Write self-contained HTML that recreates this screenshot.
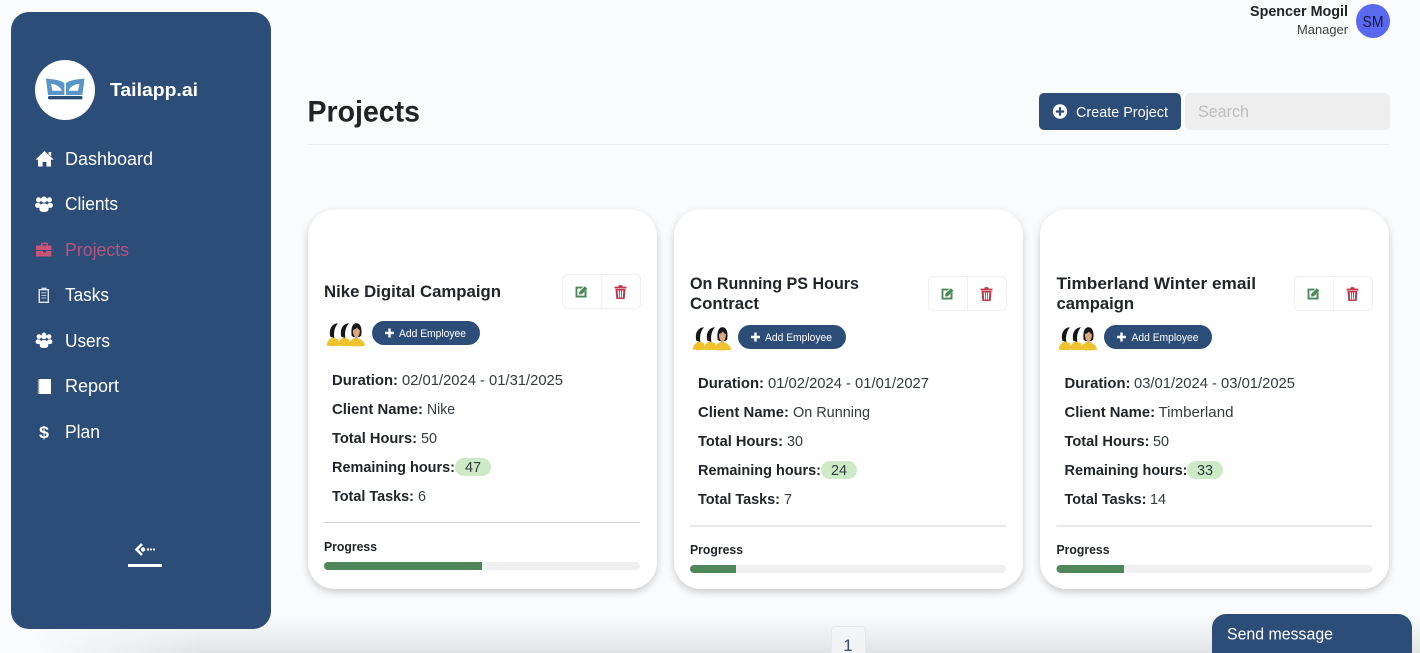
<!DOCTYPE html>
<html lang="en"><head><meta charset="utf-8"><title>Projects</title>
<style>
html,body{margin:0;padding:0;background:#fafbfd;width:1420px;height:653px;overflow:hidden}
svg{display:block;font-family:"Liberation Sans",sans-serif}
.b{font-weight:700;fill:#212529}
.v{fill:#333a40}
.d{font-size:15px}
.n{font-size:18.5px;fill:#fff}
</style></head><body>
<svg width="1420" height="653" viewBox="0 0 1420 653" xmlns="http://www.w3.org/2000/svg">
<defs>
<linearGradient id="bot" x1="0" y1="0" x2="0" y2="1"><stop offset="0" stop-color="#fafbfd"/><stop offset="1" stop-color="#e2e3e5"/></linearGradient>
<linearGradient id="fadeL" x1="0" y1="0" x2="1" y2="0"><stop offset="0" stop-color="#000"/><stop offset="1" stop-color="#fff"/></linearGradient>
<mask id="mk"><rect width="1420" height="653" fill="#000"/><rect x="200" y="615" width="1220" height="38" fill="#fff"/><rect x="30" y="615" width="170" height="38" fill="url(#fadeL)"/></mask>
<filter id="cs" x="-10%" y="-10%" width="120%" height="120%"><feDropShadow dx="0" dy="3" stdDeviation="4" flood-color="#000" flood-opacity=".2"/></filter>
<symbol id="people" viewBox="0 0 18 16">
<circle cx="3.6" cy="3.8" r="2.5" fill="#fff"/><circle cx="14.4" cy="3.8" r="2.5" fill="#fff"/><circle cx="9" cy="3.6" r="3.1" fill="#fff"/>
<ellipse cx="2.9" cy="9.3" rx="2.9" ry="2.6" fill="#fff"/><ellipse cx="15.1" cy="9.3" rx="2.9" ry="2.6" fill="#fff"/>
<path d="M4.4 13 C4.4 9 6.4 7.4 9 7.4 C11.6 7.4 13.6 9 13.6 13 C13.6 15.4 11.5 16 9 16 C6.5 16 4.4 15.4 4.4 13Z" fill="#fff"/></symbol>
<symbol id="edit" viewBox="0 0 14 14"><path d="M0.6 1.8 H9 L7 3.8 H2.6 V11.4 H10.2 V7.6 L12.4 5.4 V13.4 H0.6Z" fill="#4a8a58"/><path d="M4.6 7.4 L10.6 1.4 L13.4 4 L7.4 10 L4.4 10.4Z" fill="#4a8a58"/></symbol>
<symbol id="trash" viewBox="0 0 14 16"><path d="M0.6 2.2 H4.6 L5.3 0.6 H8.7 L9.4 2.2 H13.4 V4.2 H0.6Z" fill="#c0394e"/><path d="M1.6 4.8 H12.4 L11.5 15.6 H2.5Z M4 6.4 L4.5 14 H5.6 L5.3 6.4Z M6.4 6.4 V14 H7.6 V6.4Z M8.7 6.4 L8.4 14 H9.5 L10 6.4Z" fill="#c0394e" fill-rule="evenodd"/></symbol>
<symbol id="ava" viewBox="0 0 40 26">
<g><path d="M0.6 24.4 C1 20 4 17.6 7 16.4 L12.4 18.5 V24.8 C8 25.4 4 25.2 0.6 24.4Z" fill="#efc22e"/><path d="M12 2.2 C5.6 2.6 2.6 8.5 4.4 15.8 L8.4 17 C7.4 11.4 8.6 6 12 2.2Z" fill="#17171b"/></g>
<g transform="translate(11,0)"><path d="M0.6 24.4 C1 20 4 17.6 7 16.4 L12.4 18.5 V24.8 C8 25.4 4 25.2 0.6 24.4Z" fill="#efc22e"/><path d="M12 2.2 C5.6 2.6 2.6 8.5 4.4 15.8 L8.4 17 C7.4 11.4 8.6 6 12 2.2Z" fill="#17171b"/></g>
<path d="M22 24.6 C22.6 20 26 18.4 28 17.2 H32.6 C34.6 18.4 38.6 20 39 24.6 C34 25.6 27 25.6 22 24.6Z" fill="#efc22e"/>
<path d="M25.6 14.6 C24.6 6 27 2.2 30.4 2.2 C34 2.2 36.4 6 35.2 14.6 L33.4 16 H27.2Z" fill="#17171b"/>
<path d="M27 9 C29 8.6 30.2 7.5 31 6.4 C31.8 8 32.8 8.8 33.8 9 C34 13 32.6 16.4 30.4 16.4 C28.2 16.4 26.8 13 27 9Z" fill="#dca77c"/><rect x="29" y="15.5" width="2.8" height="2.6" fill="#dca77c"/>
</symbol>
</defs>

<rect x="0" y="615" width="1420" height="38" fill="url(#bot)" mask="url(#mk)"/>

<!-- Sidebar -->
<rect x="11" y="12" width="260" height="617" rx="18" fill="#2d4d79"/>
<circle cx="65" cy="90" r="30" fill="#fff"/>
<path d="M46 78.5 C52 79.4 60 79.6 64.4 83 V95 H48 C47.4 90 46.6 84 46 78.5Z M51 83.8 L52.4 90.8 H61.8 C60.4 86.8 56 84.4 51 83.8Z" fill="#5b96c8" fill-rule="evenodd"/>
<path d="M84.5 78.5 C78.5 79.4 70.5 79.6 66 83 V95 H82.4 C83 90 83.9 84 84.5 78.5Z M79.4 83.8 L78 90.8 H68.6 C70 86.8 74.4 84.4 79.4 83.8Z" fill="#5b96c8" fill-rule="evenodd"/>
<rect x="48" y="96" width="34.5" height="3.4" rx="1.6" fill="#2d4d79"/>
<text x="110" y="96" font-size="18.5" font-weight="700" fill="#fff" textLength="88" lengthAdjust="spacingAndGlyphs">Tailapp.ai</text>

<path d="M44.5 151 L53.8 159.6 H51 V166.5 H46.4 V162 H42.6 V166.5 H38 V159.6 H35.6 Z M48.6 152 H51.2 V156.4 L48.6 154.2Z" fill="#fff"/>
<text class="n" x="65" y="165" textLength="88" lengthAdjust="spacingAndGlyphs">Dashboard</text>
<use href="#people" x="35" y="196" width="18" height="16"/>
<text class="n" x="65" y="210" textLength="53" lengthAdjust="spacingAndGlyphs">Clients</text>
<path d="M41 245.5 V243.8 C41 243 41.6 242.6 42.2 242.6 H46.8 C47.4 242.6 48 243 48 243.8 V245.5 H51.4 V250 H36 V245.5Z M42.5 245.5 H46.5 V244 H42.5Z M36 251 H43 V252.4 H46 V251 H51.4 V256.5 H36Z" fill="#c85478" fill-rule="evenodd"/>
<text class="n" x="65" y="256" style="fill:#b4557f" textLength="64" lengthAdjust="spacingAndGlyphs">Projects</text>

<path d="M38.5 289 H41.5 V287.6 H46.5 V289 H49 V303 H38.5Z M40 290.4 V301.6 H47.6 V290.4Z M41.4 292.4 H46.4 V293.2 H41.4Z M41.4 295 H46.4 V295.8 H41.4Z M41.4 297.6 H46.4 V298.4 H41.4Z" fill="#dfe5ee" fill-rule="evenodd"/>
<text class="n" x="65" y="301" textLength="44" lengthAdjust="spacingAndGlyphs">Tasks</text>
<use href="#people" x="35" y="333" width="18" height="15"/>
<circle cx="44" cy="334.6" r="2.1" fill="#fff"/>
<text class="n" x="65" y="347" textLength="45" lengthAdjust="spacingAndGlyphs">Users</text>
<path d="M38.5 379 H51 V394 H38.5Z" fill="#fff"/><path d="M37.5 381 H39.5 M37.5 384 H39.5 M37.5 387 H39.5 M37.5 390 H39.5 M37.5 392.6 H39.5" stroke="#8ea2bc" stroke-width="1"/>
<text class="n" x="65" y="392" textLength="54" lengthAdjust="spacingAndGlyphs">Report</text>
<text x="39" y="438" font-size="17" font-weight="700" fill="#fff" textLength="10" lengthAdjust="spacingAndGlyphs">$</text>
<text class="n" x="65" y="438" textLength="35" lengthAdjust="spacingAndGlyphs">Plan</text>

<path d="M142 544 L136.5 549.5 L142 555" fill="none" stroke="#fff" stroke-width="2.6"/>
<circle cx="143" cy="549.5" r="2.2" fill="#fff"/><circle cx="148" cy="549.5" r="1.2" fill="#fff"/><circle cx="151" cy="549.5" r="1.1" fill="#fff"/><circle cx="154" cy="549.5" r="1.1" fill="#fff"/>
<rect x="128" y="564" width="34" height="3" fill="#fff"/>

<!-- Top user -->
<text x="1250" y="16" font-size="14.5" font-weight="700" fill="#212529" textLength="98" lengthAdjust="spacingAndGlyphs">Spencer Mogil</text>
<text x="1297" y="34" font-size="12.5" fill="#3c4248" textLength="51" lengthAdjust="spacingAndGlyphs">Manager</text>
<circle cx="1373" cy="21" r="17" fill="#5869f0"/>
<text x="1362.5" y="27" font-size="16" fill="#14183a" textLength="21" lengthAdjust="spacingAndGlyphs">SM</text>

<!-- Header -->
<text x="307.5" y="121.5" font-size="30" font-weight="700" fill="#212529" textLength="112.5" lengthAdjust="spacingAndGlyphs">Projects</text>
<rect x="1039" y="93" width="142" height="37" rx="5" fill="#2d4d79"/>
<circle cx="1060" cy="111.5" r="7.2" fill="#fff"/><path d="M1060 107.3 V115.7 M1055.8 111.5 H1064.2" stroke="#2d4d79" stroke-width="2.2"/>
<text x="1076" y="117" font-size="15" fill="#fff" textLength="92" lengthAdjust="spacingAndGlyphs">Create Project</text>
<rect x="1185" y="93" width="205" height="37" rx="5" fill="#eeeeef"/>
<text x="1198" y="117" font-size="16.5" fill="#bdbdbd" textLength="51" lengthAdjust="spacingAndGlyphs">Search</text>
<rect x="308" y="144" width="1081" height="1" fill="#eceef0"/>

<!-- Card 1 -->
<rect x="308" y="209.5" width="349" height="379.5" rx="27" fill="#fff" filter="url(#cs)"/>
<text class="b" x="324" y="297" font-size="16.5" textLength="177" lengthAdjust="spacingAndGlyphs">Nike Digital Campaign</text>
<rect x="562.5" y="274.5" width="78" height="34" rx="5" fill="#fff" stroke="#eeeff0"/><rect x="601" y="275" width="1" height="33" fill="#eeeff0"/>
<use href="#edit" x="575" y="285" width="13" height="13"/><use href="#trash" x="614" y="284.5" width="13" height="15"/>
<use href="#ava" x="326" y="321" width="40" height="26"/>
<rect x="372" y="321" width="108" height="24" rx="12" fill="#2d4d79"/>
<path d="M389.5 328.5 V337.5 M385 333 H394" stroke="#fff" stroke-width="2.4"/>
<text x="399" y="337" font-size="11" fill="#fff" textLength="67" lengthAdjust="spacingAndGlyphs">Add Employee</text>
<text class="b d" x="332" y="385" textLength="66" lengthAdjust="spacingAndGlyphs">Duration:</text><text class="v d" x="402" y="385" textLength="161" lengthAdjust="spacingAndGlyphs">02/01/2024 - 01/31/2025</text>
<text class="b d" x="332" y="414" textLength="91" lengthAdjust="spacingAndGlyphs">Client Name:</text><text class="v d" x="427" y="414" textLength="28" lengthAdjust="spacingAndGlyphs">Nike</text>
<text class="b d" x="332" y="443" textLength="85" lengthAdjust="spacingAndGlyphs">Total Hours:</text><text class="v d" x="421" y="443" textLength="16" lengthAdjust="spacingAndGlyphs">50</text>
<text class="b d" x="332" y="472" textLength="123" lengthAdjust="spacingAndGlyphs">Remaining hours:</text>
<rect x="455" y="458" width="36" height="18" rx="9" fill="#cdeac6"/><text class="v d" x="465" y="472" textLength="16" lengthAdjust="spacingAndGlyphs">47</text>
<text class="b d" x="332" y="501" textLength="82" lengthAdjust="spacingAndGlyphs">Total Tasks:</text><text class="v d" x="418" y="501" textLength="8" lengthAdjust="spacingAndGlyphs">6</text>
<rect x="324" y="522" width="316" height="1" fill="#cfd0d2"/>
<text class="b" x="324" y="551" font-size="12.5" textLength="53" lengthAdjust="spacingAndGlyphs">Progress</text>
<rect x="324" y="562" width="316" height="8" rx="4" fill="#f0f0f1"/>
<path d="M328 562 H482 V570 H328 A4 4 0 0 1 328 562Z" fill="#4f875a"/>

<!-- Card 2 -->
<rect x="674" y="209.5" width="349" height="379.5" rx="27" fill="#fff" filter="url(#cs)"/>
<text class="b" x="690" y="289" font-size="16.5" textLength="169" lengthAdjust="spacingAndGlyphs">On Running PS Hours</text>
<text class="b" x="690" y="309" font-size="16.5" textLength="69" lengthAdjust="spacingAndGlyphs">Contract</text>
<rect x="928.5" y="276.5" width="78" height="34" rx="5" fill="#fff" stroke="#eeeff0"/><rect x="967" y="277" width="1" height="33" fill="#eeeff0"/>
<use href="#edit" x="941" y="287" width="13" height="13"/><use href="#trash" x="980" y="286.5" width="13" height="15"/>
<use href="#ava" x="692" y="325" width="40" height="26"/>
<rect x="738" y="325" width="108" height="24" rx="12" fill="#2d4d79"/>
<path d="M755.5 332.5 V341.5 M751 337 H760" stroke="#fff" stroke-width="2.4"/>
<text x="765" y="341" font-size="11" fill="#fff" textLength="67" lengthAdjust="spacingAndGlyphs">Add Employee</text>
<text class="b d" x="698" y="388" textLength="66" lengthAdjust="spacingAndGlyphs">Duration:</text><text class="v d" x="768" y="388" textLength="161" lengthAdjust="spacingAndGlyphs">01/02/2024 - 01/01/2027</text>
<text class="b d" x="698" y="417" textLength="91" lengthAdjust="spacingAndGlyphs">Client Name:</text><text class="v d" x="793" y="417" textLength="77" lengthAdjust="spacingAndGlyphs">On Running</text>
<text class="b d" x="698" y="446" textLength="85" lengthAdjust="spacingAndGlyphs">Total Hours:</text><text class="v d" x="787" y="446" textLength="16" lengthAdjust="spacingAndGlyphs">30</text>
<text class="b d" x="698" y="475" textLength="123" lengthAdjust="spacingAndGlyphs">Remaining hours:</text>
<rect x="821" y="461" width="36" height="18" rx="9" fill="#cdeac6"/><text class="v d" x="831" y="475" textLength="16" lengthAdjust="spacingAndGlyphs">24</text>
<text class="b d" x="698" y="504" textLength="82" lengthAdjust="spacingAndGlyphs">Total Tasks:</text><text class="v d" x="784" y="504" textLength="8" lengthAdjust="spacingAndGlyphs">7</text>
<rect x="690" y="525.5" width="316" height="1" fill="#cfd0d2"/>
<text class="b" x="690" y="554" font-size="12.5" textLength="53" lengthAdjust="spacingAndGlyphs">Progress</text>
<rect x="690" y="565" width="316" height="8" rx="4" fill="#f0f0f1"/>
<path d="M694 565 H736 V573 H694 A4 4 0 0 1 694 565Z" fill="#4f875a"/>

<!-- Card 3 -->
<rect x="1040" y="209.5" width="349" height="379.5" rx="27" fill="#fff" filter="url(#cs)"/>
<text class="b" x="1056.5" y="289" font-size="16.5" textLength="199.5" lengthAdjust="spacingAndGlyphs">Timberland Winter email</text>
<text class="b" x="1056.5" y="309" font-size="16.5" textLength="77.5" lengthAdjust="spacingAndGlyphs">campaign</text>
<rect x="1294.5" y="276.5" width="78" height="34" rx="5" fill="#fff" stroke="#eeeff0"/><rect x="1333" y="277" width="1" height="33" fill="#eeeff0"/>
<use href="#edit" x="1307" y="287" width="13" height="13"/><use href="#trash" x="1346" y="286.5" width="13" height="15"/>
<use href="#ava" x="1058" y="325" width="40" height="26"/>
<rect x="1104" y="325" width="108" height="24" rx="12" fill="#2d4d79"/>
<path d="M1121.5 332.5 V341.5 M1117 337 H1126" stroke="#fff" stroke-width="2.4"/>
<text x="1131.5" y="341" font-size="11" fill="#fff" textLength="67" lengthAdjust="spacingAndGlyphs">Add Employee</text>
<text class="b d" x="1064.5" y="388" textLength="66" lengthAdjust="spacingAndGlyphs">Duration:</text><text class="v d" x="1134" y="388" textLength="161" lengthAdjust="spacingAndGlyphs">03/01/2024 - 03/01/2025</text>
<text class="b d" x="1064.5" y="417" textLength="90.5" lengthAdjust="spacingAndGlyphs">Client Name:</text><text class="v d" x="1158.5" y="417" textLength="75" lengthAdjust="spacingAndGlyphs">Timberland</text>
<text class="b d" x="1064.5" y="446" textLength="85" lengthAdjust="spacingAndGlyphs">Total Hours:</text><text class="v d" x="1153" y="446" textLength="16" lengthAdjust="spacingAndGlyphs">50</text>
<text class="b d" x="1064.5" y="475" textLength="123" lengthAdjust="spacingAndGlyphs">Remaining hours:</text>
<rect x="1187" y="461" width="36" height="18" rx="9" fill="#cdeac6"/><text class="v d" x="1197" y="475" textLength="16" lengthAdjust="spacingAndGlyphs">33</text>
<text class="b d" x="1064.5" y="504" textLength="82" lengthAdjust="spacingAndGlyphs">Total Tasks:</text><text class="v d" x="1150" y="504" textLength="16" lengthAdjust="spacingAndGlyphs">14</text>
<rect x="1056.5" y="525.5" width="316" height="1" fill="#cfd0d2"/>
<text class="b" x="1056.5" y="554" font-size="12.5" textLength="53" lengthAdjust="spacingAndGlyphs">Progress</text>
<rect x="1056.5" y="565" width="316" height="8" rx="4" fill="#f0f0f1"/>
<path d="M1060.5 565 H1124 V573 H1060.5 A4 4 0 0 1 1060.5 565Z" fill="#4f875a"/>

<!-- Pagination -->
<rect x="831.5" y="626.5" width="34" height="40" rx="4" fill="#f3f4f5" stroke="#e6e7e9"/>
<text x="848" y="651" font-size="17" fill="#2d4d79" text-anchor="middle">1</text>

<!-- Chat -->
<path d="M1212 653 V628 A14 14 0 0 1 1226 614 H1398 A14 14 0 0 1 1412 628 V653Z" fill="#2d4d79"/>
<text x="1227" y="639.5" font-size="17" fill="#fff" textLength="106" lengthAdjust="spacingAndGlyphs">Send message</text>
</svg>
</body></html>
